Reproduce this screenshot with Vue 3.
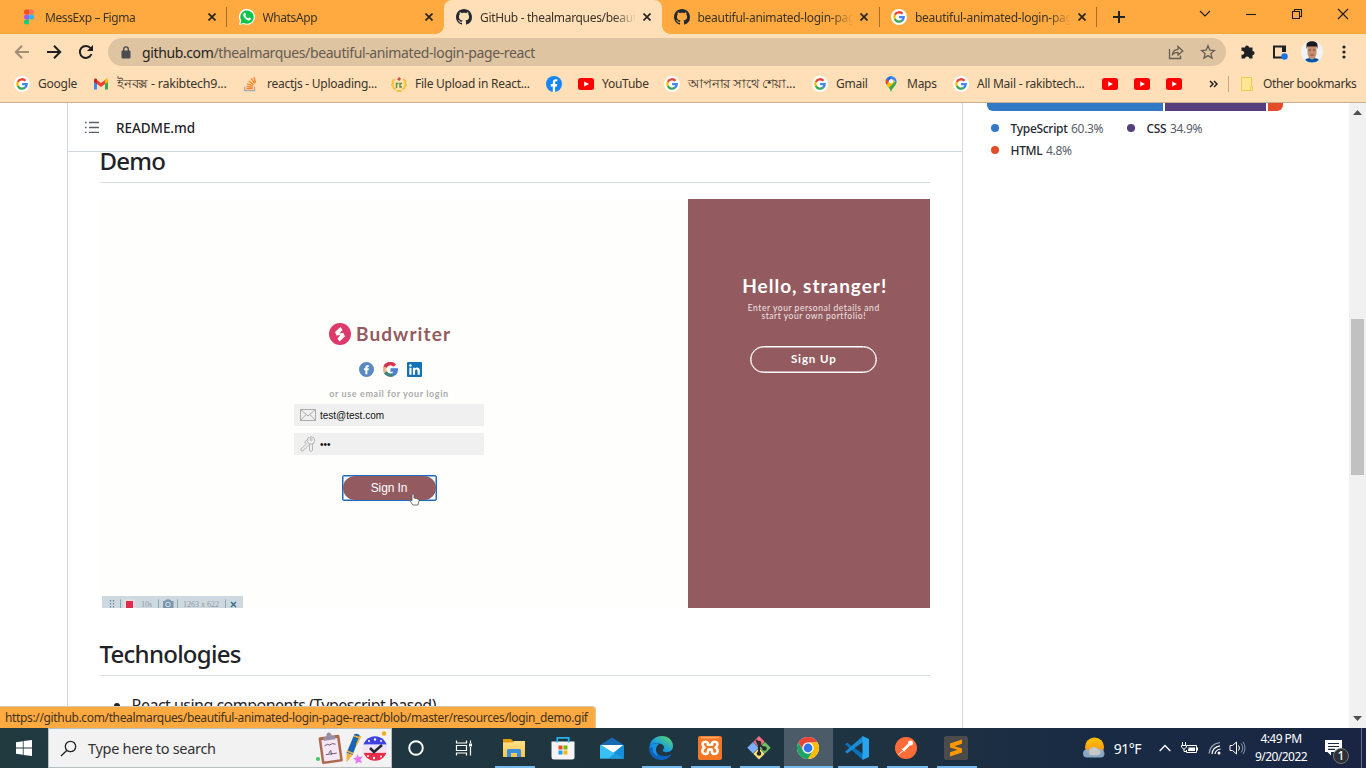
<script setup>
const tabs = [
  { icon: 'figma', label: 'MessExp – Figma', ls: -0.4 },
  { icon: 'whatsapp', label: 'WhatsApp', sep: true, ls: -0.4 },
  { icon: 'github', label: 'GitHub - thealmarques/beautiful-animated', active: true, ls: -0.32 },
  { icon: 'github', label: 'beautiful-animated-login-page-react', ls: -0.28 },
  { icon: 'google', label: 'beautiful-animated-login-page-react', sep: true, ls: -0.28 },
]
const bookmarks = [
  { icon: 'google', label: 'Google', w: 79 },
  { icon: 'gmail', label: 'ইনবক্স - rakibtech9...', w: 150, bn: true },
  { icon: 'stack', label: 'reactjs - Uploading...', w: 148 },
  { icon: 'fileup', label: 'File Upload in React...', w: 155 },
  { icon: 'facebook', label: '', w: 32 },
  { icon: 'youtube', label: 'YouTube', w: 86 },
  { icon: 'google', label: 'আপনার সাথে শেয়া...', w: 148, bn: true },
  { icon: 'google', label: 'Gmail', w: 71 },
  { icon: 'maps', label: 'Maps', w: 70 },
  { icon: 'google', label: 'All Mail - rakibtech...', w: 149 },
  { icon: 'youtube', label: '', w: 32 },
  { icon: 'youtube', label: '', w: 32 },
  { icon: 'youtube', label: '', w: 32 },
]
const apps = [
  { icon: 'cortana' }, { icon: 'taskview' }, { icon: 'explorer', open: true }, { icon: 'store' },
  { icon: 'mail' }, { icon: 'edge', open: true }, { icon: 'xampp', open: true }, { icon: 'git', open: true },
  { icon: 'chrome', open: true, active: true }, { icon: 'vscode', open: true }, { icon: 'postman', open: true },
  { icon: 'sublime', open: true },
]
</script>

<template>
  <svg class="sprite" width="0" height="0">
    <defs>
      <linearGradient id="edgeA" x1="0" y1="1" x2="1" y2="0"><stop offset="0" stop-color="#0b5cb5" /><stop offset=".45" stop-color="#1ba0dc" /><stop offset="1" stop-color="#62e05a" /></linearGradient>
      <linearGradient id="sun" x1="0" y1="0" x2="0" y2="1"><stop offset="0" stop-color="#ffc400" /><stop offset="1" stop-color="#f78a1d" /></linearGradient>
      <linearGradient id="fold" x1="0" y1="0" x2="0" y2="1"><stop offset="0" stop-color="#ffe08a" /><stop offset="1" stop-color="#f7c648" /></linearGradient>
      <linearGradient id="globe" x1="0" y1="0" x2="0" y2="1"><stop offset=".3" stop-color="#3d43dc" /><stop offset=".36" stop-color="#e9e6ff" /><stop offset=".66" stop-color="#f7e3ec" /><stop offset=".7" stop-color="#e92a48" /></linearGradient>
    </defs>
    <symbol id="figma" viewBox="0 0 16 16"><path fill="#f24e1e" d="M8 .5H5.5a2.5 2.5 0 0 0 0 5H8z" /><path fill="#ff7262" d="M8 .5h2.500a2.500 2.500 0 0 1 0 5H8z" /><path fill="#a259ff" d="M8 5.500H5.500a2.500 2.500 0 0 0 0 5H8z" /><circle cx="10.500" cy="8" r="2.500" fill="#1abcfe" /><path fill="#0acf83" d="M8 10.500H5.500A2.500 2.500 0 1 0 8 13z" /></symbol>
    <symbol id="whatsapp" viewBox="0 0 16 16"><path fill="#fff" d="M0 16l1-4.200A8 8 0 1 1 4.400 15z" /><path fill="#10c44c" d="M1.300 14.700l.9-3.200a6.700 6.700 0 1 1 2.600 2.500z" /><path fill="#fff" d="M5 4c.5-.5 1.200-.5 1.500.3l.5 1.200c.1.500-.6.9-.6 1.200.5 1.200 1.500 2.100 2.700 2.600.4 0 .8-1 1.200-.8l1.500.8c.6.5-.3 2-1.600 2.100C7.500 11.600 3.800 7.700 4.200 5.600c.1-.8.400-1.200.8-1.600z" /></symbol>
    <symbol id="github" viewBox="0 0 16 16"><path fill="#24292f" d="M8 0C3.580 0 0 3.580 0 8c0 3.540 2.290 6.530 5.470 7.590.4.070.550-.170.550-.380 0-.190-.010-.820-.010-1.490-2.010.370-2.530-.490-2.690-.940-.090-.230-.480-.940-.820-1.130-.280-.150-.680-.520-.010-.530.630-.010 1.080.580 1.230.820.720 1.210 1.870.870 2.330.660.070-.520.280-.870.510-1.070-1.780-.200-3.640-.890-3.640-3.950 0-.870.310-1.590.820-2.150-.080-.200-.360-1.020.080-2.120 0 0 .670-.210 2.200.820.640-.180 1.320-.270 2-.270s1.360.090 2 .270c1.530-1.040 2.200-.820 2.200-.820.440 1.100.160 1.920.080 2.120.510.560.820 1.270.820 2.150 0 3.070-1.870 3.750-3.650 3.950.290.250.540.730.540 1.480 0 1.070-.010 1.930-.010 2.200 0 .210.150.460.550.380A8.010 8.010 0 0 0 16 8c0-4.420-3.580-8-8-8z" /></symbol>
    <symbol id="google" viewBox="0 0 16 16"><circle cx="8" cy="8" r="8" fill="#fff" /><g fill="none" stroke-width="2.300"><path stroke="#ea4335" d="M3.800 5.900A4.700 4.700 0 0 1 11.500 4.800" /><path stroke="#fbbc05" d="M3.900 10.200a4.700 4.700 0 0 1 0-4.400" /><path stroke="#34a853" d="M3.800 10.100a4.700 4.700 0 0 0 7.200 1.500" /><path stroke="#4285f4" d="M8.100 8.100h4.600a4.700 4.700 0 0 1-1.800 3.500" /></g></symbol>
    <symbol id="gmail" viewBox="0 0 16 16"><path fill="#4285f4" d="M1 4v9.500h3V6z" /><path fill="#34a853" d="M12 6v7.500h3V4z" /><path fill="#ea4335" d="M4 4l4 3 4-3v4l-4 3-4-3z" /><path fill="#c5221f" d="M1 4c0-1.700 1.800-2 3-1v5L1 6z" /><path fill="#fbbc04" d="M15 4c0-1.700-1.800-2-3-1v5l3-2z" /></symbol>
    <symbol id="stack" viewBox="0 0 16 16"><path fill="none" stroke="#a9a9a9" stroke-width="1.300" d="M1.700 10.500v4.200h9.800v-4.200" /><path fill="none" stroke="#f48024" stroke-width="1.300" d="M3.500 12.700h6M3.600 10.500l6 .8M4.200 7.900l5.600 2.100M5.800 5l4.700 3.800M8.200 2.400l3.400 5M11 1.200l1.600 5.500" /></symbol>
    <symbol id="fileup" viewBox="0 0 16 16"><path fill="none" stroke="#f5c23c" stroke-width="2" d="M4 3.500C1 4 1.500 6.500 2.200 7L1 9l1.300 1.500C2.500 12.500 4 13 5 13M12 3.500c3 .5 2.500 3 1.800 3.500L15 9l-1.300 1.500c-.2 2-1.700 2.500-2.700 2.500M5.500 15h5" /><path fill="#d64c5a" d="M8 1l2 1.500L8.500 5 6 3.500z" /><path stroke="#5b9140" stroke-width="1.400" fill="none" d="M5.500 12V7.500h2M11 7.500H9v3.500h2" /></symbol>
    <symbol id="facebook" viewBox="0 0 16 16"><circle cx="8" cy="8" r="8" fill="#1486f5" /><path fill="#fff" d="M6.800 16v-5.500h-2V8h2V6.300C6.800 4.200 8 3.200 9.800 3.200c.8 0 1.500.1 1.500.1v2h-1c-.9 0-1.200.500-1.200 1.200V8h2.200l-.4 2.500H9.100V16z" /></symbol>
    <symbol id="youtube" viewBox="0 0 16 16"><rect y="2" width="16" height="12" rx="2.500" fill="#f00" /><path fill="#fff" d="M6.200 5.400L11 8l-4.800 2.600z" /></symbol>
    <symbol id="maps" viewBox="0 0 16 16"><path fill="#34a853" d="M2.600 7C4 10 6.500 11 8 16c1.200-4.500 5.500-6.500 5.500-10.600z" /><path fill="#fbbc04" d="M3.500 8.500L10 3l1 4-5.500 5z" /><path fill="#ea4335" d="M3.500 2.500L6 5 3.500 8.500C2 6 2.400 4 3.500 2.500z" /><path fill="#1a73e8" d="M3.500 2.500C5.500 0 8 0 9.700.4L5.500 5.500z" /><path fill="#4285f4" d="M9.700.4c3.300 1 4.300 4 3.600 6.300L10 3.500 7.500 3z" /><circle cx="8" cy="5.500" r="2" fill="#fff" /></symbol>

    <symbol id="cortana" viewBox="0 0 24 24"><circle cx="12" cy="12" r="6.800" fill="none" stroke="#fff" stroke-width="1.900" /></symbol>
    <symbol id="taskview" viewBox="0 0 24 24"><g fill="none" stroke="#fff" stroke-width="1.200"><path d="M3.500 4.500V7h10V4.500M3.500 19.500V17h10v2.500M3.500 9.500h10v5h-10zM17.500 4.500v2.500M17.500 11v8.500" /></g><path fill="#fff" d="M16 7.500h3v3h-3z" /></symbol>
    <symbol id="explorer" viewBox="0 0 24 24"><path fill="#e39a0b" d="M1 3h8l2 2v4H1z" /><path fill="url(#fold)" d="M1 6.500h9l2-1.500h11v16H1z" /><path fill="#3a8fdc" d="M5 21v-6.500q0-1.500 1.500-1.500h11q1.500 0 1.500 1.500V21h-4v-4H9v4z" /></symbol>
    <symbol id="store" viewBox="0 0 24 24"><path fill="#f5f5f7" d="M.5 5.500h23V21q0 2.500-2.500 2.500H3Q.5 23.500.5 21z" /><path fill="none" stroke="#24b3f0" stroke-width="1.700" d="M6.300 6.500V1.800h11.400v4.700" /><path fill="#e84f25" d="M7.500 9.500h4v4h-4z" /><path fill="#7db700" d="M12.500 9.500h4v4h-4z" /><path fill="#18a4ea" d="M7.500 14.500h4v4h-4z" /><path fill="#fbb511" d="M12.500 14.500h4v4h-4z" /></symbol>
    <symbol id="mail" viewBox="0 0 24 24"><path fill="#1769b2" d="M0 9L12 1.500 24 9z" /><path fill="#1b9be7" d="M0 9v13.500h24V9z" /><path fill="#fff" d="M1 9h22l-10 8z" /><path fill="#37c1f4" d="M0 9l24 13.500H0z" /><path fill="#1384cf" d="M24 9L8.500 22.500H24z" opacity=".6" /></symbol>
    <symbol id="edge" viewBox="0 0 24 24"><path fill="url(#edgeA)" d="M.3 11.500C.7 4 7 0 12.500 0 20 0 24 5 24 10c0 4-3 6.200-6.500 6.200-3 0-4.500-1.200-3.300-2.700 2.200-3-.2-5.800-4.500-6C4 7.400.9 9.800.3 11.500z" /><path fill="#0c63bd" d="M.2 12C1 8.500 5 7 8 7.400c-4 3-2 9 2 11.300 4 2.200 8 1.600 12.500-.5C19 23.500 14.500 24 12 24 5 24-.5 18.500.2 12z" /><path fill="#1791e2" d="M.2 12C2 7.600 7 7 10 8c-4 3-3.500 8-1 12-4.500-1-6-6-5-9z" /></symbol>
    <symbol id="xampp" viewBox="0 0 24 24"><rect width="24" height="24" rx="2" fill="#f37623" /><path fill="#ffac70" d="M3 .8h18v1.600H3z" /><path fill="none" stroke="#fff" stroke-width="2.600" stroke-linejoin="round" d="M9 6.200C6.500 5 4 6.600 4.800 9c.3 1.200 1 2 1.700 2.700-2 .8-2.800 3-1.700 4.800 1.500 2.300 5 1.800 5.200-.7l.1-1.500q.1-.9 1-.9h1.800q.9 0 1 .9l.1 1.500c.2 2.500 3.700 3 5.200.7 1.100-1.800.3-4-1.700-4.800.7-.7 1.400-1.500 1.700-2.700.8-2.400-1.700-4-4.200-2.800q-.9.500-.9 1.500v1H9.900v-1q0-1-.9-1.500z" /></symbol>
    <symbol id="git" viewBox="0 0 24 24"><path fill="#f27180" d="M12 0l5.700 5.700L12 11.400 6.300 5.700z" /><path fill="#7eaef5" d="M6 6l5.700 5.700L6 17.400.3 11.700z" /><path fill="#6cc464" d="M18 6l5.700 5.700L18 17.400l-5.700-5.700z" /><path fill="#ffe37c" d="M12 12l5.700 5.700L12 23.400l-5.700-5.700z" /><path stroke="#26282c" stroke-width="2" fill="none" d="M9 4l3 3.500v10M12 8l5 4.500" /><g fill="#26282c"><circle cx="12" cy="7" r="2.300" /><circle cx="12" cy="17.500" r="2.300" /><circle cx="17.500" cy="12.500" r="2.300" /></g></symbol>
    <symbol id="chrome" viewBox="0 0 24 24"><circle cx="12" cy="12" r="11" fill="#fff" /><path fill="#ea4335" d="M2.470 6.500A11 11 0 0 1 21.530 6.500H12a5.500 5.500 0 0 0-4.760 8.250z" /><path fill="#fbbc05" d="M21.530 6.500A11 11 0 0 1 12 23l4.760-8.250A5.500 5.500 0 0 0 12 6.500z" /><path fill="#1da462" d="M12 23A11 11 0 0 1 2.470 6.500l4.770 8.250a5.500 5.500 0 0 0 9.520 0z" /><circle cx="12" cy="12" r="5.500" fill="#fff" /><circle cx="12" cy="12" r="4.400" fill="#3273ea" /></symbol>
    <symbol id="vscode" viewBox="0 0 24 24"><path fill="#0b72ba" d="M0 8.200l2-1.700L18 18v6z" /><path fill="#1a8cd8" d="M0 15.800l2 1.700L18 6V0z" /><path fill="#29a5ef" d="M17.500 0L24 3v18l-6.500 3z" /></symbol>
    <symbol id="postman" viewBox="0 0 24 24"><circle cx="12" cy="12" r="11" fill="#ff6c37" /><path stroke="#fff" stroke-width="2.600" d="M9 14.500l6-6" /><path stroke="#fff" stroke-width="1" d="M4.500 18.500l5-4M8 12.500l3 3" /><circle cx="16.500" cy="7" r="2.500" fill="#fff" /></symbol>
    <symbol id="sublime" viewBox="0 0 24 24"><rect width="24" height="24" rx="2" fill="#4b4b4b" /><path fill="#ff9800" d="M6 7.500l12-4v4.300l-7.500 2.400L18 12.500v4L6 20.500v-4.300l7.500-2.500L6 11.500z" /></symbol>
  </svg>

  <div class="screen">
    <div class="tabstrip">
      <div v-for="(t, i) in tabs" :key="i" class="tab" :class="{ active: t.active, sep: t.sep }">
        <svg width="16" height="16"><use :href="'#' + t.icon" /></svg>
        <span class="tablabel" :style="{ letterSpacing: t.ls + 'px' }">{{ t.label }}</span>
        <svg class="x" width="8" height="8" viewBox="0 0 8 8"><path d="M.5.5l7 7M7.500.5l-7 7" stroke="#27241f" stroke-width="1.700" /></svg>
      </div>
      <div class="newtab"><svg width="12" height="12" viewBox="0 0 12 12"><path d="M6 0v12M0 6h12" stroke="#26221d" stroke-width="2" /></svg></div>
      <div class="winctl">
        <svg width="12" height="12" viewBox="0 0 12 12"><path d="M1 3l5 5 5-5" /></svg>
        <svg width="12" height="12" viewBox="0 0 12 12"><path d="M1 6.500h10" /></svg>
        <svg width="12" height="12" viewBox="0 0 12 12"><path d="M1.500 3.500h7v7h-7zM3.500 3.500v-2h7v7h-2" /></svg>
        <svg width="12" height="12" viewBox="0 0 12 12"><path d="M1 1l10 10M11 1L1 11" /></svg>
      </div>
    </div>

    <div class="toolbar">
      <svg class="nav back" width="16" height="16" viewBox="0 0 16 16"><path d="M15 8H2M8 1.800L1.800 8 8 14.200" /></svg>
      <svg class="nav" width="16" height="16" viewBox="0 0 16 16"><path d="M1 8h13M8 1.800L14.200 8 8 14.200" /></svg>
      <svg class="nav" width="16" height="16" viewBox="0 0 16 16"><path d="M13.500 10A6 6 0 1 1 12.600 4.200" /><path d="M15 1v6H9z" fill="#1f1f22" stroke="none" /></svg>
      <div class="omni">
        <svg width="10" height="13" viewBox="0 0 10 13"><path fill="none" stroke="#4b4b50" stroke-width="1.400" d="M2.700 5V3.200a2.300 2.300 0 0 1 4.600 0V5" /><rect x="0.500" y="4.500" width="9" height="8" rx="1" fill="#4b4b50" /></svg>
        <span class="url">github.com<i>/thealmarques/beautiful-animated-login-page-react</i></span>
        <svg class="share" width="16" height="16" viewBox="0 0 16 16"><path d="M1.500 5v9.500h11v-3M4.500 10.500C5 7 7 5.500 10 5.300V2.500L14.800 7 10 11V8.300C7.500 8.200 6 9 4.500 10.500z" /></svg>
        <svg class="star" width="16" height="16" viewBox="0 0 16 16"><path d="M8 1.800l1.800 4.300 4.700.4-3.600 3 1.100 4.600L8 11.600l-4 2.500 1.100-4.600-3.600-3 4.700-.4z" /></svg>
      </div>
      <svg class="ext" width="16" height="16" viewBox="0 0 16 16"><path fill="#1f2023" d="M1.500 3.500H5a2 2 0 1 1 4 0h3.500V7a2.100 2.100 0 1 1 0 4.200v3.300H9.300a2 2 0 1 0-4.200 0H1.500v-3.800a2 2 0 1 0 0-3.700z" /></svg>
      <svg class="side" width="16" height="16" viewBox="0 0 16 16"><path fill="none" stroke="#1f2023" stroke-width="2" d="M10 13.500H2v-11h11V8" /><path fill="#1f2023" d="M10 2h4v6h-4z" /><circle cx="12.500" cy="12.500" r="3.200" fill="#1a73e8" /></svg>
      <svg class="avatar" width="22" height="22" viewBox="0 0 22 22"><circle cx="11" cy="11" r="11" fill="#f0f2f6" /><path fill="#0b53a2" d="M4 19c2-2 4-2 7-2s5 0 7 2a11 11 0 0 1-14 0z" /><path fill="#c78d70" d="M6.500 5h9v6c0 4-2 7.500-4.500 7.500S6.500 15 6.500 11z" /><path fill="#17191c" d="M5.500 8V4c0-5 11-5 11 0v4l-1-2.500h-9z" /><path stroke="#5e382e" stroke-width=".8" d="M7.500 9h2.500M12 9h2.500M9.500 14h3" /></svg>
      <svg class="dots" width="4" height="14" viewBox="0 0 4 14"><g fill="#222"><circle cx="2" cy="2" r="1.600" /><circle cx="2" cy="7" r="1.600" /><circle cx="2" cy="12" r="1.600" /></g></svg>
    </div>

    <div class="bookmarks">
      <div v-for="(b, i) in bookmarks" :key="i" class="bm" :class="{ bn: b.bn }" :style="{ width: b.w + 'px' }">
        <svg width="16" height="16"><use :href="'#' + b.icon" /></svg>
        <span v-if="b.label">{{ b.label }}</span>
      </div>
      <svg class="more" width="9" height="8" viewBox="0 0 9 8"><path d="M1 1l3 3-3 3M5 1l3 3-3 3" fill="none" stroke="#222" stroke-width="1.500" /></svg>
      <div class="other">
        <svg width="12" height="14" viewBox="0 0 12 14"><path fill="#ffe694" stroke="#eccb51" d="M.5.500h10v9h1v4h-11zM9.500 13V9.500" /></svg>
        <span>Other bookmarks</span>
      </div>
    </div>

    <div class="page">
      <main>
        <header>
          <svg width="14" height="12" viewBox="0 0 14 12"><path stroke="#57606a" stroke-width="1.300" d="M4 1.500h10M4 6.500h10M4 11.300h10M0 1.500h1.600M0 6.500h1.600M0 11.300h1.600" /></svg>
          <b>README.md</b>
        </header>
        <article>
          <h2 class="h-demo">Demo</h2>
          <div class="demo">
            <section class="login">
              <div class="brand">
                <svg width="22" height="22" viewBox="0 0 22 22"><circle cx="11" cy="11" r="11" fill="#dc3a6a" /><path fill="#fff" d="M11.500 4L6 9l1.500 3.500 4-.5-3 3.500 2 3 5.500-5-1.500-3.500-4 .500 3-3.500z" /></svg>
                <span>Budwriter</span>
              </div>
              <div class="social">
                <svg width="15" height="15" viewBox="0 0 16 16"><circle cx="8" cy="8" r="8" fill="#5b89c3" /><path fill="#fff" d="M6.800 13V8.800H5.300V6.700h1.500V5.600C6.800 3.800 8 3.200 10.500 3.400v1.800c-1.300 0-1.600.2-1.600 1.500h1.600l-.3 2.100H8.900V13z" /></svg>
                <svg width="15" height="15" viewBox="0 0 16 16"><g fill="none" stroke-width="3.800"><path stroke="#d9344f" d="M2 6a6 6 0 0 1 10.500-2" /><path stroke="#e8b98a" d="M2.600 11a6 6 0 0 1-.6-5.500" /><path stroke="#41837e" d="M2.600 10.800a6 6 0 0 0 8 2.600" /><path stroke="#4a80cc" d="M8 8.500h6a6 6 0 0 1-3.500 4.900" /></g></svg>
                <svg width="15" height="15" viewBox="0 0 16 16"><rect width="16" height="16" rx="1" fill="#1272b5" /><path fill="#fff" d="M2.500 6h2.300v7.500H2.500zM6.300 6h2.200v1c1.500-2 5.200-1.500 5.200 2v4.500h-2.400V9.700c0-2.400-2.700-2.200-2.700 0v3.800H6.300z" /><circle cx="3.600" cy="3.700" r="1.400" fill="#fff" /></svg>
              </div>
              <p class="hint">or use email for your login</p>
              <div class="field"><svg width="16" height="12" viewBox="0 0 16 12"><path fill="none" stroke="#aaa" d="M.5.500h15v11H.5zM.5.500L8 7l7.500-6.500M.5 11.500L6 5.500M15.500 11.500L10 5.500" /></svg><span>test@test.com</span></div>
              <div class="field"><svg width="16" height="16" viewBox="0 0 16 16"><g fill="none" stroke="#b5b5b5"><circle cx="11" cy="4.500" r="3.700" /><circle cx="11" cy="3.500" r="1" /><path d="M9.500 8v6.500l1.500 1 1.500-1V8M7.500 3.500L4.500 6l2 2L.8 13l.5 2 2-.3 1-1.700 1.500-.3.7-1.500 2.500-2.500" /></g></svg><span class="pw">•••</span></div>
              <div class="signin"><span>Sign In</span>
                <svg width="11" height="13" viewBox="0 0 11 13"><path fill="#fff" stroke="#555" stroke-width=".8" d="M3 6V1.500q1-1 2 0V5l4 1q1 0 1 1.500L9 12H4L1 8q0-1 1-1l1 1z" /></svg>
              </div>
            </section>
            <aside class="stranger">
              <h3>Hello, stranger!</h3>
              <p>Enter your personal details and<br />start your own portfolio!</p>
              <div class="signup">Sign Up</div>
            </aside>
            <div class="recorder">
              <svg width="141" height="12" viewBox="0 0 141 12"><path stroke="#6f8ea6" stroke-dasharray="1.500 1.500" stroke-width="1.300" d="M8.500 4v8M11.500 4v8" /><path stroke="#8ba7b5" d="M18.500 3.500V12M56.500 3.500V12M75.500 3.500V12M123.500 3.500V12" /><path fill="#e8dfe4" d="M21.500 3.500h11V12h-11z" /><path fill="#e12a4d" d="M24 5h7v7h-7z" /><path fill="#7b97ac" d="M61 5h2l1-1.500h4L69 5h2.500v7H61z" /><circle cx="66" cy="8.500" r="2.300" fill="#7b97ac" stroke="#dbe5ea" /><text x="39" y="11.300">10s</text><text x="81" y="11.300" textLength="36">1263 x 622</text><path stroke="#3e6d8c" stroke-width="1.500" d="M129 6l5 5M134 6l-5 5" /></svg>
            </div>
          </div>
          <h2 class="h-tech">Technologies</h2>
          <ul><li>React using components (Typescript based)</li></ul>
        </article>
      </main>
      <div class="langs">
        <div class="bar"><i class="ts"></i><i class="css"></i><i class="html"></i></div>
        <div class="legend first"><span class="a"><em class="ts"></em><b>TypeScript</b> 60.3%</span><span><em class="css"></em><b>CSS</b> 34.9%</span></div>
        <div class="legend"><span><em class="html"></em><b>HTML</b> 4.8%</span></div>
      </div>
      <div class="scroll">
        <svg width="9" height="5" viewBox="0 0 9 5"><path fill="#505050" d="M0 5l4.500-5L9 5z" /></svg>
        <div class="thumb"></div>
        <svg width="9" height="5" viewBox="0 0 9 5"><path fill="#505050" d="M0 0l4.500 5L9 0z" /></svg>
      </div>
      <div class="status">https://github.com/thealmarques/beautiful-animated-login-page-react/blob/master/resources/login_demo.gif</div>
    </div>

    <div class="taskbar">
      <div class="start"><svg width="16" height="16" viewBox="0 0 16 16"><path fill="#fff" d="M0 2.200l6.800-1v6.400H0zM7.600 1.100L16 0v7.600H7.600zM0 8.400h6.800v6.400l-6.800-1zM7.600 8.400H16V16l-8.400-1.100z" /></svg></div>
      <div class="search">
        <svg width="17" height="17" viewBox="0 0 17 17"><g fill="none" stroke="#222" stroke-width="1.300"><circle cx="10.500" cy="6.500" r="5.200" /><path d="M7 10.200L1 16" /></g></svg>
        <span>Type here to search</span>
        <svg class="doodle" width="76" height="34" viewBox="0 0 76 34">
          <g transform="rotate(-8 15 17)"><rect x="5" y="5" width="21" height="27" rx="1.500" fill="#ad6950" /><path fill="#f5e7f6" d="M7.500 8h16v21.500h-16z" /><path fill="#9a8fa9" d="M10 5.500h3q.2-4 2.700-4t2.800 4h3v3.500H10z" /><path fill="none" stroke="#4d435d" stroke-width=".8" d="M10 14l3-1 2 1 3-1 3 1M10 23h11M13 22l2.500-2.500V24" /></g>
          <circle cx="3" cy="28" r="2" fill="#3cc96a" />
          <path fill="#1a65b1" d="M39.500 3q4-1 5.500 2l-7.500 19-6-2z" /><path stroke="#f4b43a" stroke-width="1.800" d="M45.500 5l-4 9M32 20l6 2.500M39 5l5 1.500" /><path fill="#f3b24a" d="M31.500 22l6 2-6 7.500z" />
          <path fill="#e579f2" d="M42 23l2 3 4-.5-2.500 3 1.500 3.500-3.500-1-3 2 .3-3.500-2.800-2.300 3.500-.7z" />
          <circle cx="60" cy="17.500" r="12.200" fill="url(#globe)" /><path fill="none" stroke="#242437" stroke-width="2.500" d="M55 17l4 4 8-7" /><g fill="#fff"><circle cx="54" cy="10" r="1" /><circle cx="60" cy="8.500" r="1.200" /><circle cx="66" cy="10" r="1" /><circle cx="53" cy="25" r="1" /><circle cx="59" cy="27" r="1.200" /><circle cx="66" cy="25.500" r="1" /></g>
          <circle cx="69" cy="2.500" r="2.200" fill="#fbab18" />
        </svg>
      </div>
      <div class="apps">
        <div v-for="a in apps" :key="a.icon" class="app" :class="{ open: a.open, current: a.active }"><svg width="24" height="24"><use :href="'#' + a.icon" /></svg></div>
      </div>
      <div class="tray">
        <svg class="weather" width="22" height="22" viewBox="0 0 22 22"><circle cx="11.500" cy="10" r="9.500" fill="url(#sun)" /><path fill="#8fb0cf" d="M4 20.500a4 4 0 0 1 0-8q1 0 2 .5c1-3.500 7-4 8.500-.5 4-1.500 7 1 7 4s-2 4-3.500 4z" opacity=".92" /><path fill="#dbd0cc" d="M7 18a5 5 0 0 1 8-6c3 1 3 6 0 6z" opacity=".7" /></svg>
        <span class="temp">91°F</span>
        <svg class="chev" width="12" height="8" viewBox="0 0 12 8"><path fill="none" stroke="#fff" stroke-width="1.300" d="M.7 7L6 1.500 11.300 7" /></svg>
        <svg class="batt" width="17" height="14" viewBox="0 0 17 14"><path fill="none" stroke="#fff" d="M1.500 1v3M4.500 1v3M.5 4.500h5v1.500l-2 2h-1l-2-2zM3 8v2.500h2M6 4.500h9.500v7h-10V9" /><path fill="#fff" d="M7.500 6.500H14v3.500H7z" /><path fill="#fff" d="M15.500 6.500H17v3h-1.500z" /></svg>
        <svg class="wifi" width="14" height="14" viewBox="0 0 14 14"><g fill="none" stroke="#fff" stroke-width="1.200"><path d="M1 12.500Q2 3 12 1.500" opacity=".6" /><path d="M4 13Q4.500 6 12 4.800M7 13q.500-4 5.500-5" /></g><circle cx="11" cy="12" r="1.500" fill="#fff" /></svg>
        <svg class="vol" width="17" height="14" viewBox="0 0 17 14"><path fill="none" stroke="#fff" d="M1 4.500h2.500L7.500 1v12L3.500 9.500H1z" /><path fill="none" stroke="#fff" d="M9.500 4.500q2 2.500 0 5" /><path fill="none" stroke="#8d98a8" d="M12 2.500q3.500 4.500 0 9M14 .8q4 6 0 12.400" /></svg>
        <div class="clock"><span>4:49 PM</span><span>9/20/2022</span></div>
        <div class="notif"><svg width="17" height="16" viewBox="0 0 17 16"><path fill="#fff" d="M0 0h17v12H6v3.500L2.500 12H0z" /><path stroke="#1b2a43" stroke-width="1.200" d="M3 3.500h11M3 6.500h11M3 9.300h7" /></svg><b>1</b></div>
        <div class="peek"></div>
      </div>
    </div>
  </div>
</template>

<style>
html, body { margin: 0; overflow: hidden; }
</style>
<style scoped>
* { box-sizing: border-box; }
svg { flex: none; display: block; }
.sprite { position: absolute; }
.screen { width: 1366px; height: 768px; display: flex; flex-direction: column; overflow: hidden; background: #fff; font-family: "Noto Sans", "Open Sans", sans-serif; font-size: 12px; color: #1f2328; letter-spacing: -0.3px; white-space: nowrap; }
.tabstrip { height: 34px; flex: none; background: #ffaa40; display: flex; padding-left: 9px; }
.tab { width: 217.500px; height: 34px; display: flex; align-items: center; padding: 0 11px 0 12px; flex: none; position: relative; color: #3b3327; }
.tab .tablabel { flex: 1; margin: 0 7px 0 8px; overflow: hidden; min-width: 0; -webkit-mask-image: linear-gradient(to right, #000 calc(100% - 22px), transparent); }
.tab.sep::before { content: ""; position: absolute; left: -.5px; top: 7px; width: 1px; height: 20px; background: #a4702e; }
.tab.active { background: #ffdfb7; border-radius: 8px 8px 0 0; }
.tab.active::before, .tab.active::after { content: ""; position: absolute; bottom: 0; width: 8px; height: 8px; }
.tab.active::before { left: -8px; background: radial-gradient(circle at 0 0, #ffaa40 7.500px, #ffdfb7 8px); }
.tab.active::after { right: -8px; background: radial-gradient(circle at 100% 0, #ffaa40 7.500px, #ffdfb7 8px); }
.newtab { width: 46px; border-left: 1px solid #a4702e; height: 20px; margin: 7px 0 0 -.5px; display: flex; align-items: center; padding: 0 0 1px 16px; }
.winctl { margin-left: auto; display: flex; gap: 34px; padding: 8px 17px 0 0; }
.winctl svg { fill: none; stroke: #1c1c1c; stroke-width: 1.100; }
.toolbar { height: 36px; flex: none; background: #ffdfb7; display: flex; align-items: center; padding-left: 14px; }
.nav { margin-right: 16px; fill: none; stroke: #1f1f22; stroke-width: 2; }
.nav.back { stroke: #a08d76; }
.omni { width: 1118px; height: 28px; border-radius: 14px; margin-left: -2px; background: #dfc4a1; display: flex; align-items: center; padding: 0 10px 0 13px; }
.omni .url { font-size: 14px; margin-left: 11px; margin-top: 0; letter-spacing: -.38px; color: #26231f; }
.omni i { font-style: normal; color: #655b50; }
.share { margin-left: auto; margin-right: 16px; }
.share, .star { fill: none; stroke: #665e55; stroke-width: 1.300; }
.ext { margin-left: 14px; }
.side { margin-left: 16px; }
.avatar { margin-left: 13px; }
.dots { margin-left: 19px; }
.bookmarks { height: 33px; flex: none; background: #ffdfb7; border-bottom: 1px solid #cab08d; display: flex; align-items: center; padding: 0 0 4px 14px; color: #3b342b; }
.bm { display: flex; align-items: center; flex: none; }
.bm span { margin: 0 0 0 8px; line-height: 16px; letter-spacing: -.25px; }
.bm.bn span { font-size: 12.500px; letter-spacing: -.25px; margin-top: 0; }
.more { margin-left: 11px; }
.other { margin-left: 10px; border-left: 1px solid #c9a77a; height: 16px; display: flex; align-items: center; padding-left: 12px; }
.other span { margin: 0 0 0 10px; line-height: 16px; letter-spacing: -.4px; }
.page { height: 625px; flex: none; position: relative; display: flex; overflow: hidden; }
main { width: 896px; margin-left: 67px; border: solid #d0d7de; border-width: 0 1px; height: 625px; flex: none; }
header { height: 49px; border-bottom: 1px solid #d0d7de; display: flex; align-items: center; padding-left: 17px; }
header b { font-size: 13.500px; font-weight: 500; margin-left: 17px; margin-top: 1px; letter-spacing: -.05px; }
article { padding: 0 32px; color: #1f2328; }
h2 { margin: 0; font-weight: 500; font-size: 24px; border-bottom: 1px solid #d8dee4; letter-spacing: -.75px; text-indent: -.5px; }
.h-demo { height: 31px; line-height: 18px; }
.demo { margin-top: 16px; height: 409px; background: #fefefc; display: flex; position: relative; }
.login { width: 587.500px; padding: 124px 9.500px 0 0; display: flex; flex-direction: column; align-items: center; }
.brand { display: flex; align-items: center; gap: 5px; height: 22px; margin-left: 2px; color: #935b60; font: 700 19px/22px Lato, sans-serif; letter-spacing: 1.100px; }
.social { display: flex; gap: 9px; margin: 17px 0 0 2px; }
.hint { margin: 10px 0 0; height: 14px; font: 700 9px/13px Lato, sans-serif; letter-spacing: .6px; color: #ababab; }
.field { width: 190px; height: 22px; margin-top: 3px; margin-bottom: 4px; background: #f0f0f0; border-radius: 1px; display: flex; align-items: center; padding-left: 6px; font: 10px "Liberation Sans", Arial, sans-serif; color: #111; letter-spacing: 0; }
.field span { margin-left: 4px; }
.signin { width: 95px; height: 26px; margin-top: 16px; border: 1px solid #1b6bc2; box-shadow: inset 0 0 0 .5px #1b6bc2; border-radius: 2px; position: relative; }
.signin span { display: block; height: 24px; border-radius: 12px; background: #935b60; color: #fff; font: 12px/24px "Liberation Sans", Arial, sans-serif; text-align: center; letter-spacing: -.1px; }
.signin svg { position: absolute; left: 66px; top: 17px; }
.stranger { flex: 1; background: #935b60; color: #fff; display: flex; flex-direction: column; align-items: center; padding: 76px 0 0 10px; font-family: Lato, sans-serif; }
h3 { margin: 0 0 0 2px; font: 700 19px/22px Lato, sans-serif; letter-spacing: 1px; }
.stranger p { margin: 7px 0 0; font-size: 8.500px; line-height: 8px; letter-spacing: .55px; text-align: center; color: #f0e4e4; }
.signup { width: 127px; height: 27px; margin-top: 26px; border: 1.500px solid #fff; box-shadow: inset 0 0 0 .5px #fff; border-radius: 14px; font: 700 11.500px/24px Lato, sans-serif; text-align: center; letter-spacing: .9px; }
.recorder { position: absolute; left: 2.400px; bottom: 0; width: 141px; height: 12px; background: #cdd9df; }
.recorder text { font: 8px "Liberation Serif", serif; fill: #8f9aa6; letter-spacing: 0; }
.h-tech { margin-top: 29px; height: 39px; line-height: 33px; }
ul { margin: 17px 0 0; padding: 0 0 0 31.500px; font-size: 16px; line-height: 24px; letter-spacing: -.52px; }
.langs { width: 296px; margin-left: 24px; color: #57606a; }
.langs .bar { height: 8px; display: flex; gap: 2px; border-radius: 0 0 6px 6px; overflow: hidden; }
.bar i { display: block; height: 8px; }
.ts { background: #3178c6; } .css { background: #563d7c; } .html { background: #e34c26; }
.bar .ts { width: 176px; } .bar .css { width: 101px; } .bar .html { flex: 1; }
.legend { height: 22px; display: flex; align-items: center; margin-left: 4px; }
.legend.first { margin-top: 6px; }
.legend span { display: flex; align-items: center; gap: 3.500px; }
.legend span.a { width: 136px; }
.legend b { font-weight: 500; color: #24292f; }
.legend em { width: 8px; height: 8px; border-radius: 4px; margin-right: 8px; }
.scroll { margin-left: auto; width: 17px; background: #f1f1f1; display: flex; flex-direction: column; align-items: center; padding: 7px 0; }
.thumb { width: 13px; height: 156px; background: #c1c1c1; margin: 204px 0 auto; }
.status { position: absolute; left: 0; bottom: 0; width: 596px; height: 22px; background: #ffaa40; border: solid #d9c7ae; border-width: 1px 1px 0 0; border-radius: 0 4px 0 0; padding-left: 5px; line-height: 22px; letter-spacing: -.35px; color: #3e3120; }
.taskbar { height: 40px; flex: none; display: flex; background: linear-gradient(90deg, #203a40, #1f3441 60%, #192b44 80%, #192543); color: #fff; }
.start { width: 48px; display: flex; align-items: center; justify-content: center; }
.search { width: 344px; background: #f2f2f2; border: 1px solid #b9bfc1; display: flex; align-items: center; padding-left: 11px; color: #333; font-size: 14.500px; letter-spacing: -.3px; }
.search span { margin-left: 11px; }
.search .doodle { margin-left: auto; }
.apps { display: flex; }
.app { width: 49.050px; display: flex; align-items: center; padding-left: 12px; position: relative; }
.app.open::after { content: ""; position: absolute; left: 5px; right: 4px; bottom: 0; height: 2px; background: #76b9ed; }
.app.current { background: #4b5b67; }
.app.current::after { left: 0; right: 0; }
.tray { margin-left: auto; display: flex; align-items: center; }
.temp { font-size: 14px; margin-left: 9px; letter-spacing: -.5px; }
.chev { margin-left: 18px; }
.batt { margin-left: 10px; } .wifi { margin-left: 10px; } .vol { margin-left: 7px; }
.clock { width: 56px; margin-left: 7px; display: flex; flex-direction: column; align-items: center; line-height: 18px; letter-spacing: -.55px; margin-top: -1px; }
.notif { position: relative; margin-left: 16px; }
.notif b { position: absolute; left: 8px; top: 8px; width: 16px; height: 16px; border-radius: 8px; background: #2d3036; border: 1px solid #777; font-size: 12px; line-height: 13px; font-weight: 500; text-align: center; letter-spacing: 0; }
.peek { width: 5px; margin-left: 19px; height: 40px; border-left: 1px solid #65708a; }
</style>
